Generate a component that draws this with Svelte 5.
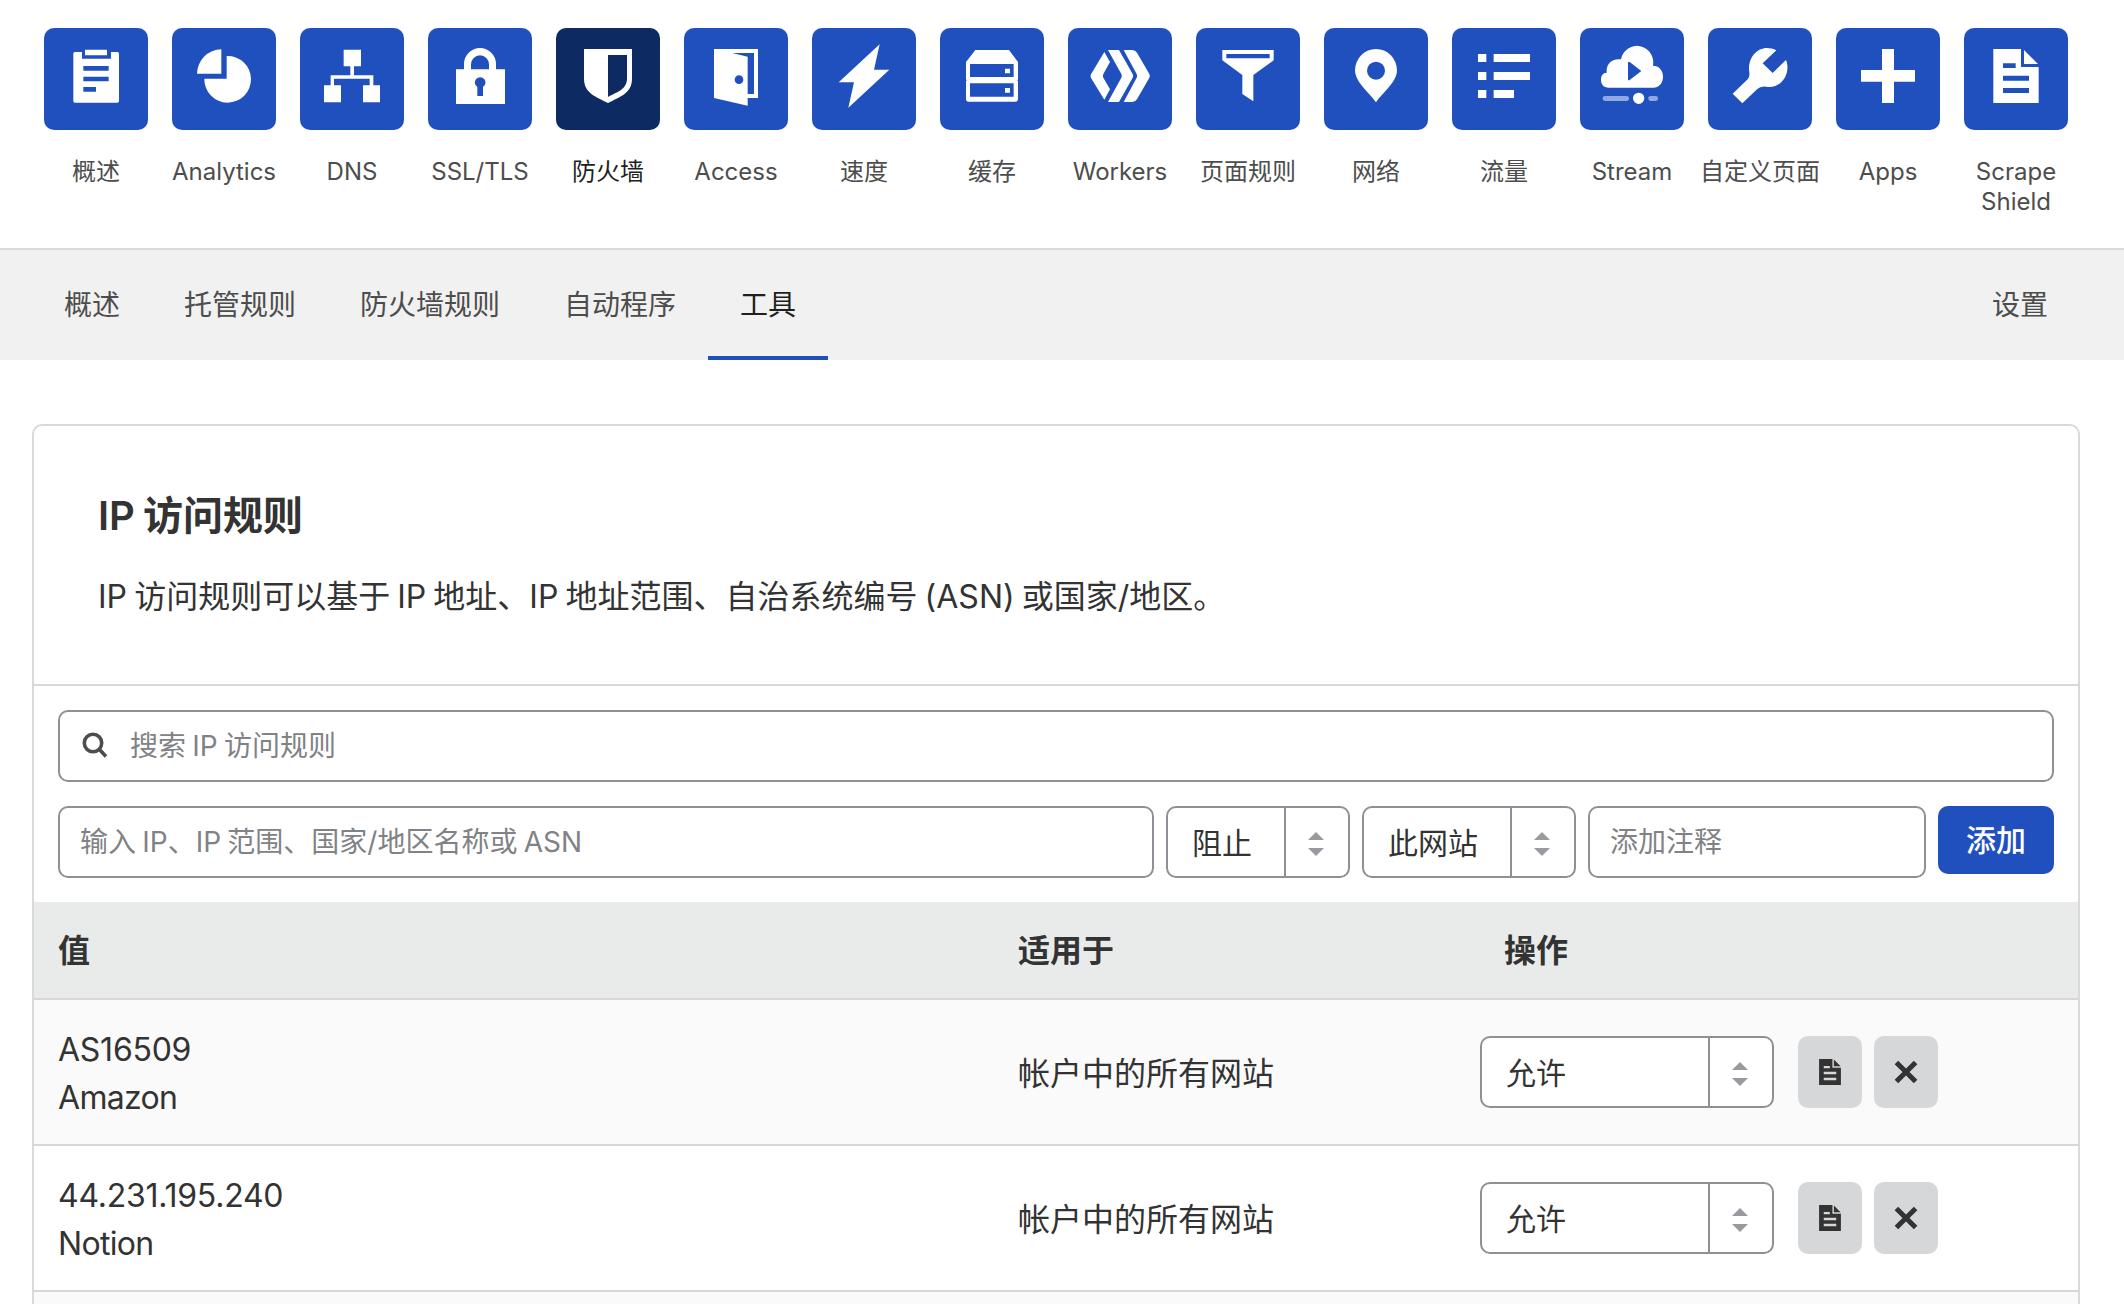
<script>
    // icon shapes are drawn on the 312x306 surface of a tile
    const docIcon = 'M88 63H171V117H224V225H88ZM117 106V120H155V106ZM117 143V158H195V143ZM117 180V195H195V180ZM180 66L222 108H180Z';

    const apps = [
        {
            label: '概述',
            path: 'M93 72H114V92H201V72H220Q225 72 225 77V219Q225 224 220 224H93Q88 224 88 219V77Q88 72 93 72ZM118 114V128H194V114ZM118 146V160H194V146ZM118 177V191H156V177ZM123 65H189V82H123Z',
        },
        {
            label: 'Analytics',
            path: 'M148 64V137H75A74 74 0 0 1 148 64ZM164 84V152H97A70 70 0 1 0 164 84Z',
        },
        {
            label: 'DNS',
            path: 'M131 65H183V115H162V142H220V172H240V223H189V172H209V152H102V172H123V223H72V172H92V142H151V115H131Z',
        },
        {
            label: 'SSL/TLS',
            path: 'M84 124H108V108A48 48 0 0 1 204 108V124H231V228H84ZM129 124H183V109A27 27 0 0 0 129 109ZM148 177V204H165V177A16 16 0 1 0 148 177Z',
        },
        {
            label: '防火墙',
            active: true,
            path: 'M84 63H228V152C228 196 190 207 156 225C122 207 84 196 84 152ZM156 81V207C182 192 213 186 213 150V81Z',
        },
        {
            label: 'Access',
            path: 'M90 63H222V210H191V233L90 210ZM145 75L191 86V198H210V75ZM165 142A13 13 0 1 0 165 168A13 13 0 1 0 165 142Z',
        },
        { label: '速度', path: 'M203 49L186 125H232L109 239L126 163H80Z' },
        {
            label: '缓存',
            path: 'M106 66H207L234 102V154L232 157L234 160V213Q234 221 226 221H86Q78 221 78 213V160L80 157L78 154V102ZM90 108V147H221V108ZM90 166V206H221V166ZM195 122H210V136H195ZM195 180H210V194H195Z',
        },
        {
            label: 'Workers',
            path: 'M109 72L126 102L106 138Q103 144 106 149L126 184L109 215L69 150Q66 144 69 139ZM120 66H153L194 138Q197 144 194 149L153 222H120L160 149Q163 144 160 138ZM167 66H193Q202 66 207 74L244 138Q247 144 244 149L207 214Q202 222 193 222H167L206 149Q209 144 206 138Z',
        },
        { label: '页面规则', path: 'M79 66H233V97L172 141V220L139 198V141L79 97ZM91 78V91H221V78Z' },
        {
            label: '网络',
            path: 'M156 223C136 194 93 162 93 127A63 64 0 0 1 219 127C219 162 176 194 156 223ZM156 101A27 27 0 1 0 156 155A27 27 0 1 0 156 101Z',
        },
        {
            label: '流量',
            path: 'M78 78H103V102H78ZM125 78H234V102H125ZM78 132H103V156H78ZM125 132H234V156H125ZM78 186H103V210H78ZM125 186H186V210H125Z',
        },
        {
            label: 'Stream',
            path: 'M86 179C71 179 63 169 63 156C63 143 69 134 80 134C78 108 94 91 123 94A48 49 0 0 1 219 113C237 113 249 127 249 146C249 166 236 179 220 179ZM144 104V154Q144 159 149 156L184 129L149 102Q144 99 144 104ZM176 194A17 17 0 1 0 176 228A17 17 0 1 0 176 194Z',
            faded: 'M76 204H139Q147 204 147 211Q147 219 139 219H76Q68 219 68 211Q68 204 76 204ZM213 204H226Q234 204 234 211Q234 219 226 219H213Q205 219 205 211Q205 204 213 204Z',
        },
        {
            label: '自定义页面',
            path: 'M205 67L164 106L194 135L234 96C250 134 221 184 175 176Q158 173 148 183L103 226L74 197L119 154Q126 147 124 134C116 85 157 43 205 67Z',
        },
        { label: 'Apps', path: 'M138 63H174V126H237V161H174V225H138V161H75V126H138Z' },
        { label: 'Scrape Shield', path: docIcon },
    ];

    const tabs = ['概述', '托管规则', '防火墙规则', '自动程序', '工具'];
    const activeTab = '工具';

    const rules = [
        { value: 'AS16509', note: 'Amazon', scope: '帐户中的所有网站', action: '允许' },
        { value: '44.231.195.240', note: 'Notion', scope: '帐户中的所有网站', action: '允许' },
    ];
</script>

{#snippet select(text)}
    <button class="select">
        <span class="select-text">{text}</span>
        <span class="arrows">
            <svg viewBox="0 0 16 24" width="16" height="24">
                <path d="M8 0L16 8H0ZM0 16H16L8 24Z" />
            </svg>
        </span>
    </button>
{/snippet}

<div class="page">
    <nav class="apps">
        {#each apps as app}
            <a href="#top" class="app" class:active={app.active}>
                <span class="tile">
                    <svg viewBox="0 0 312 306">
                        <path d={app.path} />
                        {#if app.faded}
                            <path d={app.faded} opacity="0.5" />
                        {/if}
                    </svg>
                </span>
                <span class="label">{app.label}</span>
            </a>
        {/each}
    </nav>

    <nav class="tabs">
        {#each tabs as t}
            <a href="#top" class:active={t === activeTab}>{t}</a>
        {/each}
        <a href="#top" class="settings">设置</a>
    </nav>

    <section class="card">
        <header>
            <h2>IP 访问规则</h2>
            <p>IP 访问规则可以基于 IP 地址、IP 地址范围、自治系统编号 (ASN) 或国家/地区。</p>
        </header>

        <div class="filters">
            <label class="search">
                <svg viewBox="0 0 26 26" width="26" height="26">
                    <circle cx="11" cy="11" r="8.7" />
                    <path d="M17 17L24 24.5" />
                </svg>
                <input placeholder="搜索 IP 访问规则" />
            </label>

            <div class="form">
                <input class="target" placeholder="输入 IP、IP 范围、国家/地区名称或 ASN" />
                {@render select('阻止')}
                {@render select('此网站')}
                <input class="comment" placeholder="添加注释" />
                <button class="add">添加</button>
            </div>
        </div>

        <div class="row head">
            <span>值</span>
            <span>适用于</span>
            <span class="action-head">操作</span>
        </div>

        {#each rules as r}
            <div class="row rule">
                <div class="text">
                    <div class="value">{r.value}</div>
                    <div class="note">{r.note}</div>
                </div>
                <div class="text">{r.scope}</div>
                <div class="actions">
                    {@render select(r.action)}
                    <button class="square" aria-label="edit">
                        <svg viewBox="88 63 136 162" width="22" height="26">
                            <path d={docIcon} />
                        </svg>
                    </button>
                    <button class="square" aria-label="delete">
                        <svg class="cross" viewBox="0 0 24 24" width="24" height="24">
                            <path d="M2.4 2.4L21.6 21.6M21.6 2.4L2.4 21.6" />
                        </svg>
                    </button>
                </div>
            </div>
        {/each}
        <div class="row rule"></div>
    </section>
</div>

<style>
    :global(body) {
        margin: 0;
        background: #fff;
    }

    .page {
        height: 1304px;
        overflow: hidden;
        font-family: Inter, "Noto Sans CJK SC", sans-serif;
        font-size: 32px;
        line-height: 48px;
        color: #333;
    }

    a {
        color: #4d4d4d;
        text-decoration: none;
    }

    button,
    input {
        box-sizing: border-box;
        margin: 0;
        padding: 0;
        border: 0;
        background: none;
        font: inherit;
        color: inherit;
    }

    .apps {
        display: flex;
        gap: 24px;
        box-sizing: border-box;
        height: 250px;
        padding: 28px 44px 0;
        border-bottom: 2px solid #d9d9d9;
    }

    .app {
        display: flex;
        flex-direction: column;
        align-items: center;
        flex: none;
        width: 104px;
        font-size: 24px;
        line-height: 30px;
        text-align: center;
    }

    .tile {
        width: 104px;
        height: 102px;
        border-radius: 10px;
        background: #2050bd;
    }

    .tile svg {
        display: block;
        width: 104px;
        height: 102px;
        fill: #fff;
        fill-rule: evenodd;
    }

    .label {
        margin: 27px -12px 0;
    }

    .app:last-child .label {
        width: 100px;
    }

    .active {
        color: #1d1f20;
    }

    .active .tile {
        background: #0e2a63;
    }

    .tabs {
        display: flex;
        height: 110px;
        padding: 0 44px 0 32px;
        background: #f1f1f1;
        font-size: 28px;
        line-height: 111px;
    }

    .tabs a {
        box-sizing: border-box;
        height: 110px;
        padding: 0 32px;
    }

    .tabs .active {
        border-bottom: 4px solid #2050bd;
    }

    .tabs .settings {
        margin-left: auto;
    }

    .card {
        margin: 64px 44px 0 32px;
        border: 2px solid #d9d9d9;
        border-radius: 10px;
        overflow: hidden;
    }

    .card header {
        box-sizing: border-box;
        height: 260px;
        padding: 65px 64px 0;
        border-bottom: 2px solid #d9d9d9;
        word-spacing: -1.9px;
    }

    h2 {
        margin: 0;
        font-size: 40px;
        font-weight: 600;
        line-height: 50px;
    }

    p {
        margin: 32px 0 0;
    }

    .filters {
        padding: 24px;
    }

    .search,
    .target,
    .comment,
    .select {
        box-sizing: border-box;
        height: 72px;
        border: 2px solid #8d9196;
        border-radius: 10px;
        background: #fff;
    }

    .search {
        display: flex;
        align-items: center;
        padding-left: 22px;
    }

    .search svg {
        margin-top: -2px;
        fill: none;
        stroke: #4d4d4d;
        stroke-width: 3.6;
    }

    .search input {
        flex: 1;
        height: 68px;
        padding-left: 22px;
    }

    input {
        font-size: 28px;
        word-spacing: -1.6px;
    }

    input::placeholder {
        color: #808285;
        opacity: 1;
    }

    .form {
        display: flex;
        gap: 12px;
        margin-top: 24px;
    }

    .target {
        flex: 1;
        padding: 0 20px;
    }

    .comment {
        width: 338px;
        padding: 0 20px;
    }

    .select {
        display: flex;
        align-items: stretch;
        font-size: 30px;
        line-height: 70px;
    }

    .select-text {
        flex: 1;
        padding: 0 32px 0 24px;
        text-align: left;
    }

    .arrows {
        display: flex;
        align-items: center;
        justify-content: center;
        width: 62px;
        border-left: 2px solid #8d9196;
    }

    .arrows svg {
        margin: 4px 2px 0 0;
        fill: #979b9f;
    }

    .add {
        width: 116px;
        height: 68px;
        border-radius: 10px;
        background: #2050bd;
        color: #fff;
        font-size: 30px;
        font-weight: 500;
    }

    .row {
        display: grid;
        grid-template-columns: 960px 462px 1fr;
        align-items: center;
        box-sizing: border-box;
        padding-left: 24px;
        border-bottom: 2px solid #d5d7d8;
    }

    .head {
        height: 98px;
        padding-top: 2px;
        background: #e9ebea;
        font-weight: 600;
    }

    .action-head {
        padding-left: 24px;
    }

    .rule {
        height: 146px;
    }

    .rule:nth-child(even) {
        background: #fafafa;
    }

    .text {
        padding-top: 3px;
    }

    .value {
        letter-spacing: -0.25px;
    }

    .note {
        letter-spacing: -0.7px;
    }

    .actions {
        display: flex;
        gap: 12px;
    }

    .actions .select {
        width: 294px;
        margin-right: 12px;
    }

    .square {
        display: flex;
        align-items: center;
        justify-content: center;
        width: 64px;
        height: 72px;
        border-radius: 10px;
        background: #d5d7d8;
    }

    .square svg {
        fill: #333;
        fill-rule: evenodd;
    }

    .square .cross {
        fill: none;
        stroke: #333;
        stroke-width: 5;
    }
</style>
